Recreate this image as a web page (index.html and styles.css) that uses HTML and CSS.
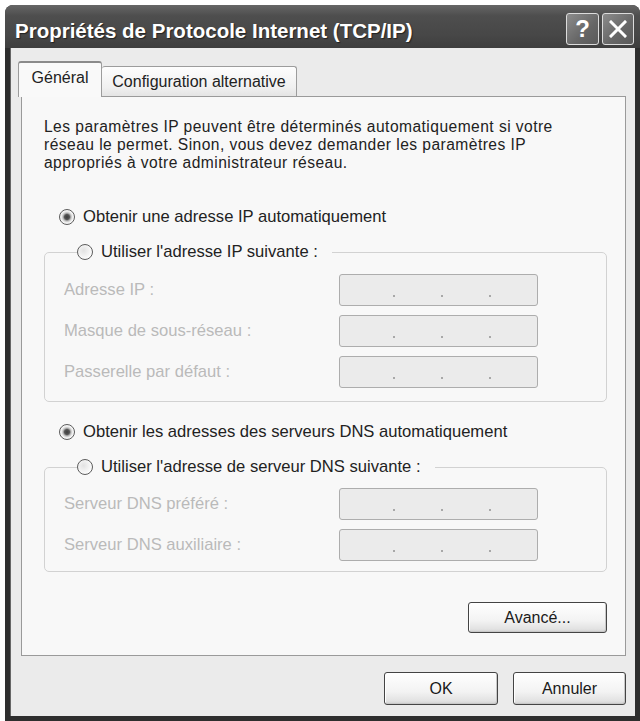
FILE: index.html
```html
<!DOCTYPE html>
<html lang="fr">
<head>
<meta charset="utf-8">
<title>Propriétés de Protocole Internet (TCP/IP)</title>
<link rel="stylesheet" href="styles.css">
</head>
<body>
<div class="window">
  <div class="titlebar">
    <span class="title">Propriétés de Protocole Internet (TCP/IP)</span>
    <div class="tbtns">
      <span class="tbtn help">?</span>
      <span class="tbtn close"><svg width="18" height="18" viewBox="0 0 18 18"><path d="M2 2L16 16M16 2L2 16" stroke="#fff" stroke-width="3" stroke-linecap="square"/></svg></span>
    </div>
  </div>
  <div class="frame">
    <div class="body">
      <div class="tabs">
        <div class="tab active">Général</div>
        <div class="tab">Configuration alternative</div>
      </div>
      <div class="panel">
        <p class="desc">Les paramètres IP peuvent être déterminés automatiquement si votre<br>réseau le permet. Sinon, vous devez demander les paramètres IP<br>appropriés à votre administrateur réseau.</p>
        <div class="option first"><span class="radio checked"></span><span>Obtenir une adresse IP automatiquement</span></div>
        <fieldset class="group g1">
          <legend><span class="option"><span class="radio"></span><span>Utiliser l'adresse IP suivante :</span></span></legend>
          <div class="row"><span class="lbl">Adresse IP :</span><span class="ip"><i></i><i></i><i></i></span></div>
          <div class="row"><span class="lbl">Masque de sous-réseau :</span><span class="ip"><i></i><i></i><i></i></span></div>
          <div class="row"><span class="lbl">Passerelle par défaut :</span><span class="ip"><i></i><i></i><i></i></span></div>
        </fieldset>
        <div class="option third"><span class="radio checked"></span><span>Obtenir les adresses des serveurs DNS automatiquement</span></div>
        <fieldset class="group g2">
          <legend><span class="option"><span class="radio"></span><span>Utiliser l'adresse de serveur DNS suivante :</span></span></legend>
          <div class="row"><span class="lbl">Serveur DNS préféré :</span><span class="ip"><i></i><i></i><i></i></span></div>
          <div class="row"><span class="lbl">Serveur DNS auxiliaire :</span><span class="ip"><i></i><i></i><i></i></span></div>
        </fieldset>
        <button class="btn adv">Avancé...</button>
      </div>
      <div class="footer">
        <button class="btn ok">OK</button>
        <button class="btn cancel">Annuler</button>
      </div>
    </div>
  </div>
</div>
</body>
</html>
```
FILE: styles.css
```css
* { box-sizing: border-box; }
html, body { margin: 0; padding: 0; background: #fff; }
body {
  font-family: "Liberation Sans", Arial, sans-serif;
  font-size: 16.6px;
  color: #222;
  width: 640px;
  height: 721px;
  overflow: hidden;
}
.window {
  margin: 5px 0 0 5px;
  width: 635px;
  height: 716px;
  background: #333;
  border-radius: 8px 8px 0 0;
  display: flex;
  flex-direction: column;
  overflow: hidden;
}
.titlebar {
  height: 43px;
  flex: none;
  display: flex;
  align-items: center;
  padding: 0 6px 0 10px;
  background: linear-gradient(#666, #4e4e4e 25%, #474747 70%, #3e3e3e);
}
.title {
  flex: 1;
  color: #fff;
  font-weight: bold;
  font-size: 20.5px;
  padding-top: 8px;
  white-space: nowrap;
  text-shadow: 1px 1px 1px #222;
}
.tbtns {
  display: flex;
  gap: 3px;
  align-self: flex-start;
  margin-top: 8px;
}
.tbtn {
  width: 33px;
  height: 32px;
  border: 1px solid #dcdcdc;
  border-radius: 3px;
  background: linear-gradient(135deg, #8c8c8c, #666 60%, #5a5a5a);
  display: flex;
  align-items: center;
  justify-content: center;
  color: #fff;
  font-weight: bold;
  font-size: 24px;
}
.tbtn.close { width: 32px; }
.frame {
  flex: 1;
  display: flex;
  padding: 0 5px 5px 5px;
  background: #2e2e2e;
}
.body {
  flex: 1;
  background: #ebebeb;
  display: flex;
  flex-direction: column;
  padding: 13px 9px 0 10px;
  border-left: 1px solid #666;
}
.tabs {
  display: flex;
  align-items: flex-end;
  height: 36px;
  margin: 0 0 -1px -3px;
  position: relative;
  z-index: 1;
  font-size: 16px;
}
.tab {
  display: flex;
  align-items: center;
  justify-content: center;
  white-space: nowrap;
  border: 1px solid #9c9c9c;
  border-bottom: none;
  border-radius: 3px 3px 0 0;
}
.tab.active {
  width: 84px;
  height: 36px;
  padding-bottom: 4px;
  background: #f9f9f9;
  border-top: 2px solid #8a8a8a;
}
.tab:not(.active) {
  width: 195px;
  height: 30px;
  margin-bottom: 1px;
  background: linear-gradient(#fdfdfd, #f0f0f0 70%, #e4e4e4);
  border-left: none;
}
.panel {
  height: 560px;
  flex: none;
  border: 1px solid #9a9a9a;
  background: #f8f8f8;
  display: flex;
  flex-direction: column;
  padding: 0 18px 0 22px;
}
.desc {
  margin: 21px 0 0 0;
  font-size: 15.6px;
  letter-spacing: 0.45px;
  line-height: 18px;
  white-space: nowrap;
}
.option {
  display: flex;
  align-items: center;
  height: 20px;
  gap: 8px;
  white-space: nowrap;
}
.option.first { margin-top: 35px; padding-left: 15px; }
.option.third { margin-top: 20px; padding-left: 15px; }
.radio {
  flex: none;
  width: 16px;
  height: 16px;
  border-radius: 50%;
  border: 1px solid #5c5c5c;
  background: radial-gradient(circle at 40% 40%, #e2e2e2, #fbfbfb 70%);
}
.radio.checked {
  background: radial-gradient(circle, #3c3c3c 0, #555 2.5px, #bdbdbd 4px, #ececec 5.5px, #fbfbfb 7px);
}
.group {
  margin: 15px 0 0 0;
  border: 1px solid #d2d2d2;
  border-radius: 5px;
  padding: 12px 0 13px 19px;
  min-width: 0;
  display: flex;
  flex-direction: column;
  gap: 9px;
}
.group.g2 { padding-top: 11px; padding-bottom: 10px; }
.group legend {
  margin-left: 13px;
  padding: 0 14px 0 0;
}
.row {
  display: flex;
  align-items: center;
  height: 32px;
}
.lbl {
  width: 275px;
  color: #bababa;
  white-space: nowrap;
}
.ip {
  width: 199px;
  height: 32px;
  border: 1px solid #adadad;
  border-radius: 3px;
  background: #ebebeb;
  display: flex;
  align-items: flex-end;
  gap: 46px;
  padding: 0 0 8px 53px;
}
.ip i {
  width: 2px;
  height: 2px;
  background: #a8a8a8;
}
.btn {
  font-family: "Liberation Sans", Arial, sans-serif;
  font-size: 16px;
  color: #1a1a1a;
  border: 1px solid #444;
  border-radius: 3px;
  background: linear-gradient(#ffffff, #f3f3f3 60%, #e2e2e2 90%, #d0d0d0);
  box-shadow: inset -1px -1px 0 #c8c8c8, inset 1px 1px 0 #fff;
  padding: 0;
}
.btn.adv {
  align-self: flex-end;
  margin-top: 30px;
  width: 139px;
  height: 31px;
}
.footer {
  display: flex;
  justify-content: flex-end;
  gap: 15px;
  margin-top: 16px;
}
.btn.ok { width: 114px; height: 33px; }
.btn.cancel { width: 113px; height: 33px; }
```
